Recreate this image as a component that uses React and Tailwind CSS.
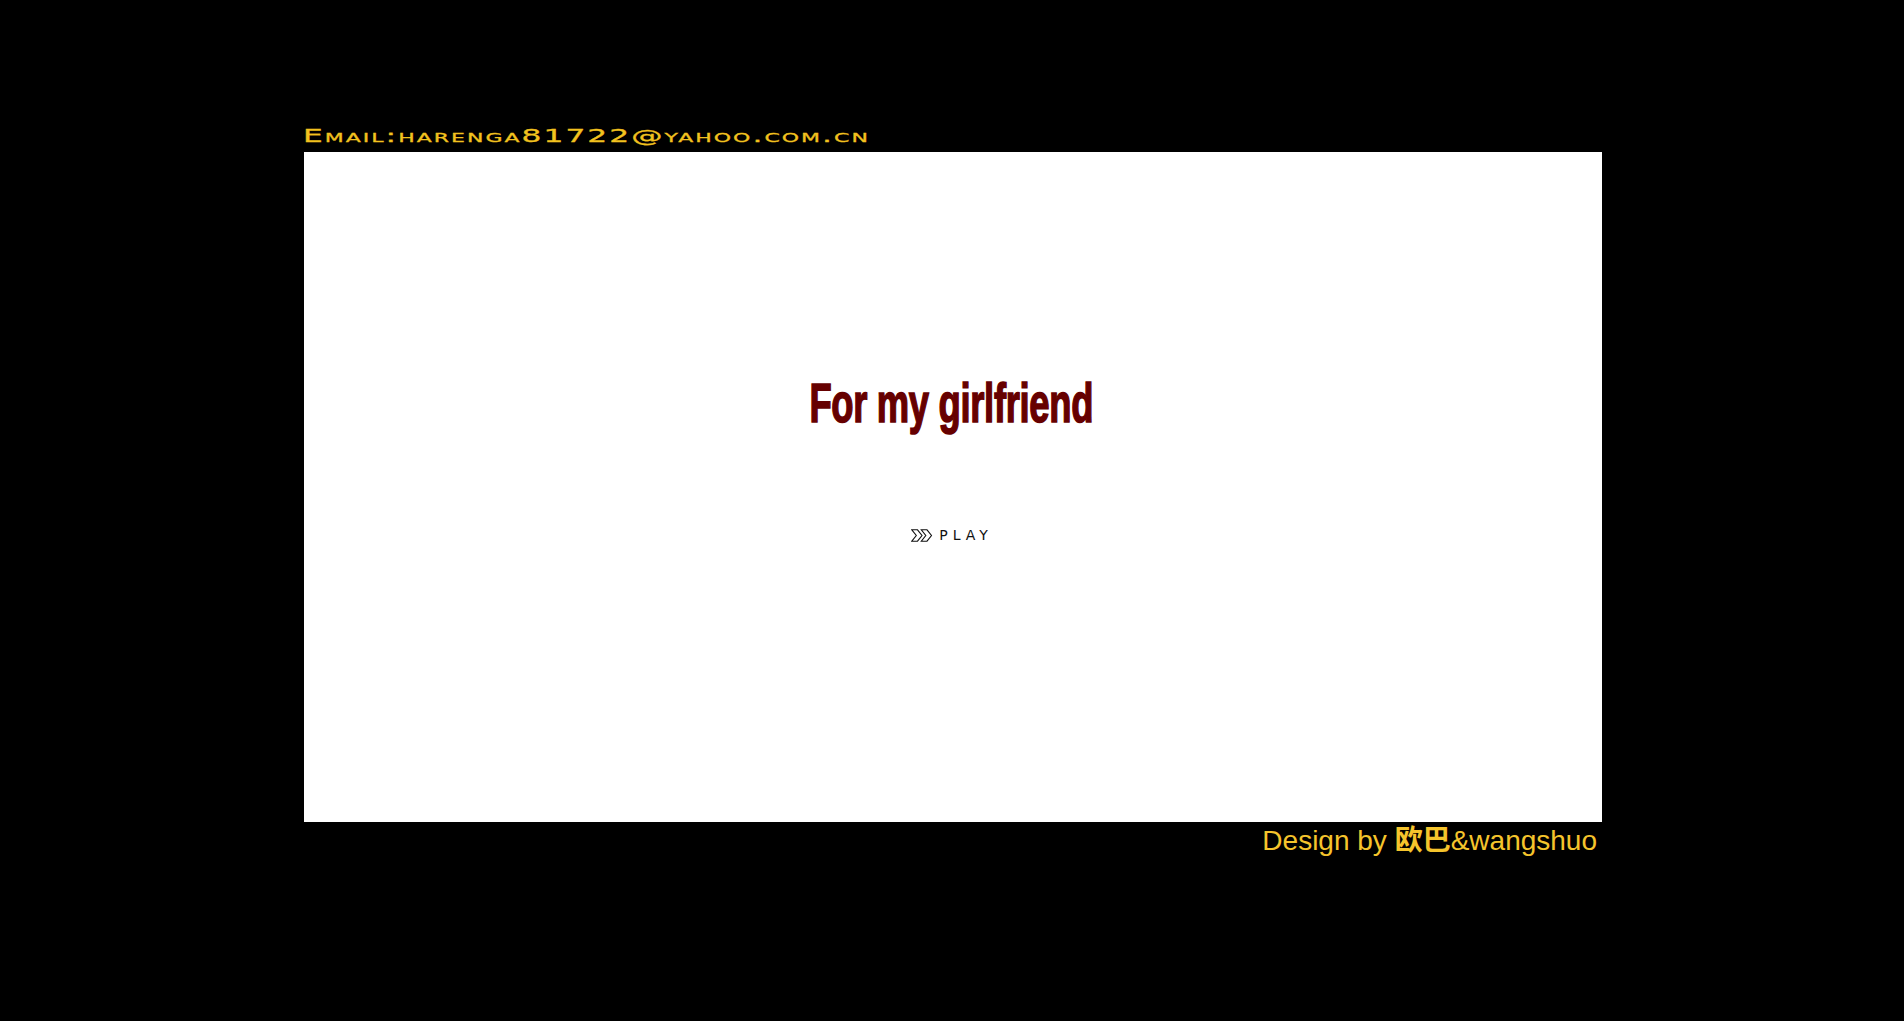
import React from "react";

function PlayIcon() {
  return (
    <svg width="23" height="13" viewBox="0 0 23 13" fill="none" stroke="#111" strokeWidth="1.1" strokeLinejoin="miter">
      <path d="M0.8 0.8 H6.5 L11 6.5 L6.5 12.2 H0.8 L5.3 6.5 Z" />
      <path d="M10.3 0.8 H16 L20.5 6.5 L16 12.2 H10.3 L14.8 6.5 Z" />
    </svg>
  );
}

export default function App() {
  return (
    <div className="w-full min-h-[1021px] bg-black flex justify-center">
      <div className="w-[1298px] ml-[2px] pt-[124px] flex flex-col">
        <div className="h-[28px] -ml-[1px]">
          <div className="origin-left scale-x-[1.69] inline-block whitespace-nowrap text-[#f2c21f] text-[18.5px] leading-[20px] tracking-[1.2px] [font-variant:small-caps] font-['DejaVu_Sans','Liberation_Sans',sans-serif] [-webkit-text-stroke:0.3px_#f2c21f]">
            Email:harenga81722@yahoo.com.cn
          </div>
        </div>
        <div className="bg-white h-[670px] flex flex-col items-center">
          <div className="mt-[221px] -ml-[4px] text-[#660000] text-[56px] leading-[60px] font-bold scale-x-[0.65] [-webkit-text-stroke:1.6px_#660000] tracking-[-0.5px] font-['Liberation_Sans',Arial,sans-serif]">
            For my girlfriend
          </div>
          <div className="mt-[95px] -ml-[2px] flex items-center gap-[5px]">
            <PlayIcon />
            <span className="text-[#111] text-[14px] leading-[14px] tracking-[5px] font-['DejaVu_Sans','Liberation_Sans',sans-serif]">
              PLAY
            </span>
          </div>
        </div>
        <div className="self-end mr-[5px] -mt-[1px] text-[#f5c42c] text-[28px] leading-[34px] font-['Liberation_Sans',Arial,'Noto_Sans_CJK_SC',sans-serif]">
          Design by{" "}
          <span className="font-bold font-['Noto_Sans_CJK_SC',sans-serif]">欧巴</span>
          &amp;wangshuo
        </div>
      </div>
    </div>
  );
}
